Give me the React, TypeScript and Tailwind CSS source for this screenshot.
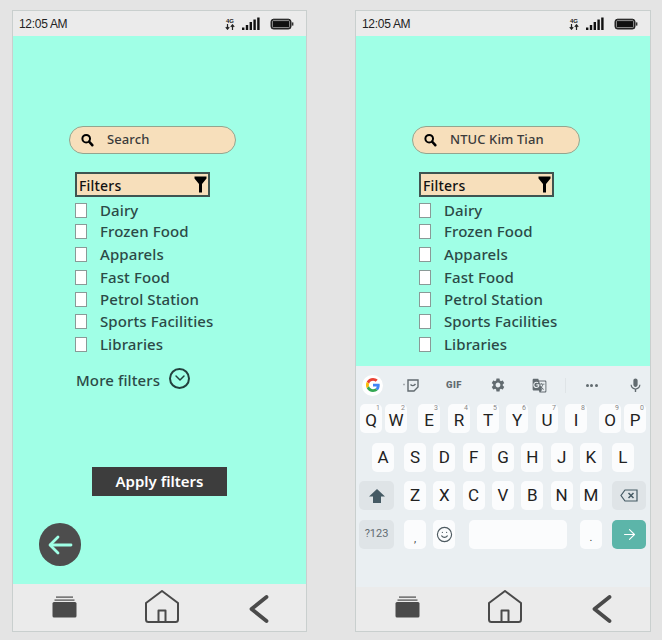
import { ArrowRight, ChevronDown, Smile } from "lucide-react"
import { MdMic, MdSettings, MdGTranslate } from "react-icons/md"

const filters = [
  { name: "Dairy", gap: "" },
  { name: "Frozen Food", gap: "" },
  { name: "Apparels", gap: "mt-[2px]" },
  { name: "Fast Food", gap: "mt-[2px]" },
  { name: "Petrol Station", gap: "mt-[1px]" },
  { name: "Sports Facilities", gap: "mt-[1px]" },
  { name: "Libraries", gap: "mt-[2px]" },
]

const topRow = [
  { k: "Q", n: "1", cls: "ml-[4px]" },
  { k: "W", n: "2", cls: "ml-[3px]" },
  { k: "E", n: "3", cls: "ml-[11px]" },
  { k: "R", n: "4", cls: "ml-[8px]" },
  { k: "T", n: "5", cls: "ml-[7px]" },
  { k: "Y", n: "6", cls: "ml-[7px]" },
  { k: "U", n: "7", cls: "ml-[8px]" },
  { k: "I", n: "8", cls: "ml-[7px]" },
  { k: "O", n: "9", cls: "ml-[12px]" },
  { k: "P", n: "0", cls: "ml-[3px]" },
]

function Key({ label, hint, className = "" }: { label: string; hint?: string; className?: string }) {
  return (
    <div className={`relative flex h-[29px] w-[22px] items-center justify-center rounded-[5px] bg-[#fbfcfd] text-[17px] leading-none text-[#222] ${className}`}>
      {label}
      {hint && <span className="absolute right-[2px] top-[1px] text-[7px] leading-[7px] text-[#888]">{hint}</span>}
    </div>
  )
}

function StatusBar() {
  return (
    <div className="flex h-[25px] shrink-0 items-center bg-[#ebebeb] pl-[6px] pr-[12px]">
      <span className="font-['Liberation_Sans',sans-serif] text-[12px] tracking-[-0.3px] text-[#222]">12:05 AM</span>
      <div className="ml-auto flex items-center">
        <div className="flex w-[10px] flex-col items-center font-['Liberation_Sans',sans-serif] font-bold leading-none text-[#222]">
          <span className="text-[6px]">4G</span>
          <svg width="10" height="6" viewBox="0 0 10 6" fill="none" stroke="#222" strokeWidth="1.2">
            <path d="M2.500 0 V5 M0.800 3.200 L2.500 5.200 L4.200 3.200" />
            <path d="M7.500 6 V1 M5.800 2.800 L7.500 0.800 L9.200 2.800" />
          </svg>
        </div>
        <svg className="ml-[7px]" width="18" height="14" viewBox="0 0 18 14" fill="#111">
          <rect x="0" y="10.500" width="2.400" height="2.500" />
          <rect x="3.800" y="8" width="2.400" height="5" />
          <rect x="7.600" y="5" width="2.400" height="8" />
          <rect x="11.400" y="2.500" width="2.400" height="10.500" />
          <rect x="15.200" y="0.500" width="2.400" height="12.500" />
        </svg>
        <svg className="ml-[10px]" width="24" height="12" viewBox="0 0 24 12">
          <rect x="1" y="1.200" width="20" height="9.800" rx="2.500" fill="#111" stroke="#222" strokeWidth="1" />
          <rect x="2.400" y="2.600" width="17.200" height="7" rx="1" fill="none" stroke="#eee" strokeWidth="0.600" />
          <rect x="21.800" y="4.400" width="1.600" height="3.200" fill="#333" />
        </svg>
      </div>
    </div>
  )
}

function NavBar() {
  return (
    <div className="flex flex-1 items-end bg-[#ebebeb] pl-[39px]">
      <svg className="mb-[13px]" width="25" height="22" viewBox="0 0 25 22" fill="#4a4a4a">
        <rect x="4" y="0.500" width="17" height="1.200" />
        <rect x="2.500" y="3.500" width="20" height="1.200" />
        <rect x="0.500" y="6" width="24" height="15.500" rx="1.500" />
      </svg>
      <svg className="mb-[8px] ml-[68px]" width="34" height="33" viewBox="0 0 34 33" fill="none" stroke="#4a4a4a" strokeWidth="2" strokeLinejoin="round">
        <path d="M17 1 L33 13 V29.500 Q33 32 30.500 32 H3.500 Q1 32 1 29.500 V13 Z" />
        <path d="M13.500 32 V20.500 H20.500 V32" />
      </svg>
      <svg className="mb-[8px] ml-[70px]" width="20" height="28" viewBox="0 0 20 28" fill="none" stroke="#4a4a4a" strokeWidth="3.800" strokeLinecap="round" strokeLinejoin="round">
        <path d="M17.500 2 L2.500 14 L17.500 26" />
      </svg>
    </div>
  )
}

function FilterForm({ query, right }: { query: string; right?: boolean }) {
  return (
    <div className={`pt-[90px] font-['Noto_Sans','Open_Sans',sans-serif] ${right ? "pl-[63px]" : "pl-[62px]"}`}>
      <div className={`flex h-[28px] items-center rounded-full border border-[#93a58f] bg-[#f7dfbb] pl-[11px] ${right ? "-ml-[7px] w-[168px]" : "-ml-[6px] w-[167px]"}`}>
        <svg width="13" height="14" viewBox="0 0 15 15" fill="none" stroke="#000" strokeLinecap="round">
          <circle cx="6" cy="6" r="4.400" strokeWidth="2.300" />
          <path d="M9.500 9.500 L13 13.500" strokeWidth="3" />
        </svg>
        <span className="ml-[13px] text-[13px] font-medium tracking-[0.1px] text-[#3b3b3b]">{query}</span>
      </div>
      <div className="mt-[18px] flex h-[25px] w-[135px] items-center border-2 border-[#3f5450] bg-[#f7dfbb] pl-[2px] pr-[1px]">
        <span className="pt-[1px] text-[14px] font-medium tracking-[0.2px] text-[#111]">Filters</span>
        <svg className="ml-auto" width="13" height="17" viewBox="0 0 13 17" fill="#000">
          <path d="M0.500 0.500 H12.500 V2.500 L8 8 V16.500 H5 V8 L0.500 2.500 Z" />
        </svg>
      </div>
      <div className="mt-[3px] flex flex-col">
        {filters.map((f) => (
          <div key={f.name} className={`flex h-[21px] items-center ${f.gap}`}>
            <div className="h-[15px] w-[12px] shrink-0 border border-[#8a9a97] bg-white" />
            <span className="ml-[13px] text-[15px] font-medium tracking-[0.1px] text-[#2c4a47]">{f.name}</span>
          </div>
        ))}
      </div>
      {!right && (
        <div className="ml-[1px] mt-[14px] flex h-[22px] items-center">
          <span className="text-[15px] font-medium tracking-[0.1px] text-[#2c4a47]">More filters</span>
          <div className="ml-[9px] -mt-[4px] flex h-[21px] w-[21px] items-center justify-center rounded-full border-2 border-[#22403d]">
            <ChevronDown size={16} strokeWidth={2.200} color="#22403d" />
          </div>
        </div>
      )}
    </div>
  )
}

function GoogleLogo() {
  return (
    <svg width="14" height="14" viewBox="0 0 48 48">
      <path fill="#EA4335" d="M24 9.500c3.500 0 6.700 1.200 9.200 3.600l6.900-6.900C35.900 2.400 30.500 0 24 0 14.600 0 6.500 5.400 2.600 13.200l8 6.200C12.500 13.700 17.800 9.500 24 9.500z" />
      <path fill="#4285F4" d="M47 24.500c0-1.600-.1-3.100-.4-4.500H24v9h12.900c-.6 3-2.200 5.500-4.700 7.200l7.700 6c4.500-4.200 7.100-10.300 7.100-17.700z" />
      <path fill="#FBBC05" d="M10.600 28.600c-.5-1.400-.8-3-.8-4.600s.3-3.200.8-4.600l-8-6.200C.9 16.500 0 20.100 0 24s.9 7.500 2.600 10.800l8-6.200z" />
      <path fill="#34A853" d="M24 48c6.500 0 11.900-2.100 15.900-5.800l-7.700-6c-2.200 1.500-4.900 2.300-8.200 2.300-6.200 0-11.500-4.200-13.400-9.900l-8 6.200C6.500 42.600 14.600 48 24 48z" />
    </svg>
  )
}

function Keyboard() {
  return (
    <div className="flex h-[221px] shrink-0 flex-col bg-[#eaeff2] font-['Roboto',sans-serif]">
      <div className="flex h-[38px] items-center pl-[6px] text-[#626b70]">
        <div className="flex h-[21px] w-[21px] items-center justify-center rounded-full bg-white">
          <GoogleLogo />
        </div>
        <svg className="ml-[20px]" width="16" height="13" viewBox="0 0 16 13" fill="none" stroke="#626b70" strokeWidth="1.400">
          <path d="M0.500 5.500 H1.500" />
          <path d="M5 1 H15 V8 L11 12 H5 Z" />
          <path d="M7.500 5.500 Q10 8 12.500 5" />
        </svg>
        <span className="ml-[27px] text-[9.500px] font-black tracking-[0.4px]">GIF</span>
        <MdSettings className="ml-[28px]" size={16} />
        <MdGTranslate className="ml-[26px]" size={15} />
        <div className="ml-[18px] h-[15px] w-px bg-[#dfe4e7]" />
        <span className="ml-[20px] flex gap-[1.500px]">
          <i className="h-[3px] w-[3px] rounded-full bg-[#626b70]" />
          <i className="h-[3px] w-[3px] rounded-full bg-[#626b70]" />
          <i className="h-[3px] w-[3px] rounded-full bg-[#626b70]" />
        </span>
        <MdMic className="ml-[29px]" size={17} />
      </div>
      <div className="flex">
        {topRow.map((key) => (
          <Key key={key.k} label={key.k} hint={key.n} className={`pt-[3px] ${key.cls}`} />
        ))}
      </div>
      <div className="mt-[10px] flex gap-[7.330px] pl-[16px]">
        <Key label="A" className="mr-[2.670px]" />
        {["S", "D", "F", "G", "H", "J", "K"].map((k) => (
          <Key key={k} label={k} />
        ))}
        <Key label="L" className="ml-[2.670px]" />
      </div>
      <div className="mt-[9px] flex items-center pl-[3px]">
        <div className="flex h-[29px] w-[35px] items-center justify-center rounded-[5px] bg-[#dfe4e7]">
          <svg width="16" height="14" viewBox="0 0 16 14" fill="#455a64">
            <path d="M8 0 L16 7.500 H12 V14 H4 V7.500 H0 Z" />
          </svg>
        </div>
        <div className="ml-[10px] flex gap-[7.330px]">
          {["Z", "X", "C", "V", "B", "N", "M"].map((k) => (
            <Key key={k} label={k} />
          ))}
        </div>
        <div className="ml-[10px] flex h-[29px] w-[34px] items-center justify-center rounded-[5px] bg-[#dfe4e7]">
          <svg width="18" height="13" viewBox="0 0 18 13" fill="none" stroke="#455a64" strokeWidth="1.200">
            <path d="M5 1 H17 V12 H5 L1 6.500 Z" />
            <path d="M8.500 4 L13.500 9 M13.500 4 L8.500 9" strokeWidth="1.500" />
          </svg>
        </div>
      </div>
      <div className="mt-[10px] flex items-center pl-[3px]">
        <div className="flex h-[29px] w-[35px] items-center justify-center rounded-[5px] bg-[#dfe4e7] text-[11px] text-[#5f6b71]">?123</div>
        <div className="ml-[10px] flex h-[29px] w-[22px] items-end justify-center rounded-[5px] bg-[#fbfcfd] pb-[5px] text-[11px] leading-none text-[#444]">,</div>
        <div className="ml-[7px] flex h-[29px] w-[22px] items-center justify-center rounded-[5px] bg-[#fbfcfd]">
          <Smile size={17} color="#4d5a60" strokeWidth={1.600} />
        </div>
        <div className="ml-[14px] h-[29px] w-[98px] rounded-[5px] bg-[#fbfcfd]" />
        <div className="ml-[13px] flex h-[29px] w-[22px] items-end justify-center rounded-[5px] bg-[#fbfcfd] pb-[6px] text-[11px] leading-none text-[#444]">.</div>
        <div className="ml-[10px] flex h-[29px] w-[34px] items-center justify-center rounded-[5px] bg-[#5cb5a9]">
          <ArrowRight size={17} color="#fff" strokeWidth={1.500} />
        </div>
      </div>
    </div>
  )
}

function Phone({ children, wide }: { children: React.ReactNode; wide?: boolean }) {
  return (
    <div className={`flex h-[622px] shrink-0 flex-col border border-[#c9cfce] bg-[#ebebeb] ${wide ? "w-[296px]" : "w-[295px]"}`}>
      <StatusBar />
      {children}
      <NavBar />
    </div>
  )
}

export default function App() {
  return (
    <div className="flex h-[640px] w-[662px] gap-[48px] overflow-hidden bg-[#e4e4e4] pl-[12px] pt-[10px]">
      <Phone>
        <div className="h-[548px] shrink-0 bg-[#a0ffe6]">
          <FilterForm query="Search" />
          <div className="ml-[79px] mt-[76px] flex h-[29px] w-[135px] items-center justify-center bg-[#3d3d3d] font-['Noto_Sans','Open_Sans',sans-serif] text-[15px] font-semibold text-white">
            Apply filters
          </div>
          <div className="ml-[26px] mt-[27px] flex h-[43px] w-[42px] items-center justify-center rounded-full bg-[#4d4d4d]">
            <svg width="26" height="22" viewBox="0 0 26 22" fill="none" stroke="#a0ffe6" strokeWidth="2.800" strokeLinecap="round" strokeLinejoin="round">
              <path d="M11 3 L3 11 L11 19" />
              <path d="M3.500 11 H24" />
            </svg>
          </div>
        </div>
      </Phone>
      <Phone wide>
        <div className="h-[330px] shrink-0 bg-[#a0ffe6]">
          <FilterForm query="NTUC Kim Tian" right />
        </div>
        <Keyboard />
      </Phone>
    </div>
  )
}
